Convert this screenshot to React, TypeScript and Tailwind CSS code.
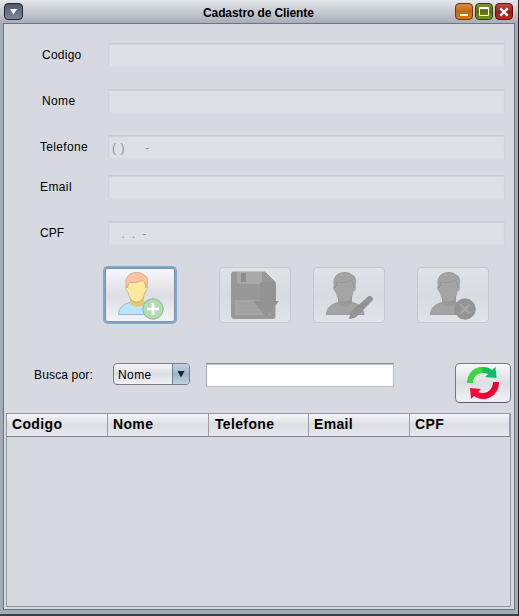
import React from "react";

const fields = [
  { label: "Codigo", pad: "pl-[38px]", gap: "mt-[19px]", tracking: "tracking-[.25px]", value: "", inputPad: "pl-[3px]" },
  { label: "Nome", pad: "pl-[38px]", gap: "mt-[22px]", tracking: "tracking-[.35px]", value: "", inputPad: "pl-[3px]" },
  { label: "Telefone", pad: "pl-9", gap: "mt-[22px]", tracking: "tracking-[.32px]", value: "( )     -", inputPad: "pl-[3px] tracking-[.5px] [word-spacing:.2px]" },
  { label: "Email", pad: "pl-9", gap: "mt-4", tracking: "tracking-[.4px]", value: "", inputPad: "pl-[3px]" },
  { label: "CPF", pad: "pl-9", gap: "mt-[22px]", tracking: "tracking-[.1px]", value: "   .  .  -", inputPad: "pl-[2px] tracking-[.15px]" },
];

const columns = [
  { name: "Codigo", width: "w-[101px]", pad: "pl-[5px]" },
  { name: "Nome", width: "w-[101px]", pad: "pl-[5px]" },
  { name: "Telefone", width: "w-[100px]", pad: "pl-[6px]" },
  { name: "Email", width: "w-[101px]", pad: "pl-[5px]" },
  { name: "CPF", width: "w-[100px]", pad: "pl-[5px]" },
];

function Person({ color = false }: { color?: boolean }) {
  const line = color ? "#aaa477" : "#949494";
  return (
    <>
      <path
        d="M5.5 46.500 C6 39 11 36 17 34.500 L31 34.500 C38 36 42 39 43 46.500 Z"
        fill={color ? "#bfe3fb" : "#a3a3a3"}
        stroke={color ? "#87b4d3" : "#969696"}
        strokeWidth=".9"
      />
      <path d="M17 28 V35 C19 40 29 40 31 35 V28 Z" fill={color ? "#e0ca70" : "#9a9a9a"} />
      <path
        d="M14 17 C12 17 12 22 15 24 C16 31 20 34 23.500 34 C27 34 31 31 32 24 C35 22 35 17 33 17 L31 11 H16 Z"
        fill={color ? "#fbe9a2" : "#a5a5a5"}
        stroke={line}
        strokeWidth=".6"
      />
      <path
        d="M14 20 C11 12 14 5 23 4.500 C27 4 30 6 31 7 C36 9 35 16 33 20 L32 15 L30 12 C25 15 19 15 16.500 14 Z"
        fill={color ? "#fcc39f" : "#a3a3a3"}
        stroke={color ? "#d3a084" : "#929292"}
        strokeWidth=".8"
      />
    </>
  );
}

function AddIcon() {
  return (
    <svg width="56" height="56" viewBox="0 0 56 56" aria-hidden="true">
      <Person color />
      <circle cx="40" cy="41" r="10.200" fill="#b4dcb3" stroke="#88bb90" />
      <path d="M40 35 V47 M34 41 H46" stroke="#fff" strokeWidth="2.600" />
    </svg>
  );
}

function SaveIcon() {
  return (
    <svg width="56" height="56" viewBox="0 0 56 56" aria-hidden="true">
      <path d="M6 4 H38 L48 14 V49 Q48 50.500 46 50.500 H7 Q4.500 50.500 4.500 48 V6 Q4.500 4 6 4 Z" fill="#989898" stroke="#909090" strokeWidth=".8" />
      <path d="M10 4 H35 V13 Q35 16 32 16 H13 Q10 16 10 13 Z" fill="#a9a9a9" />
      <path d="M14 5 H19 V14 H14 Z" fill="#8e8e8e" />
      <path d="M8 32 H43 V47 H8 Z" fill="#a5a5a5" />
      <path d="M12 36 H39 M12 40 H39 M12 44 H39" stroke="#9c9c9c" />
      <path d="M33 16 Q33 14 35 14 H47 Q49 14 49 16 V33 H52 L39 49 L26 33 H33 Z" fill="#939393" />
    </svg>
  );
}

function EditIcon() {
  return (
    <svg width="56" height="56" viewBox="0 0 56 56" aria-hidden="true">
      <Person />
      <path d="M28.500 50.500 L30.500 44 L47 29 Q49 27.500 51 29.500 Q52.500 31.500 50.500 33 L34.500 49 Z" fill="#939393" stroke="#898989" strokeWidth=".9" />
      <path d="M30.500 44 L34.500 49 M45 31 L49 35" fill="none" stroke="#a2a2a2" strokeWidth=".8" />
    </svg>
  );
}

function RemoveIcon() {
  return (
    <svg width="56" height="56" viewBox="0 0 56 56" aria-hidden="true">
      <Person />
      <circle cx="40" cy="41" r="10.200" fill="#949494" stroke="#8e8e8e" />
      <path d="M35.500 36.500 L44.500 45.500 M44.500 36.500 L35.500 45.500" stroke="#a9a9a9" strokeWidth="2.400" />
    </svg>
  );
}

function RefreshIcon() {
  return (
    <svg width="34" height="34" viewBox="0 0 34 34" aria-hidden="true">
      <path d="M1 17 C1 7 9 0 17 1 V7 C11 7 7 11 7 17 Z" fill="#37d83d" />
      <path d="M17 1 C21 1 24 2 26 4 L29.500 1 L30.500 12 L19 11 L22 8 Q20 7 17 7 Z" fill="#10bc68" />
      <path d="M33 16 C33 26 26 33 17 33 V27 C23 27 27 22 27 16 Z" fill="#eb0430" />
      <path d="M17 33 C13 33 11 32 8 30 L5 33 L4 22 L15 23 L12 26 Q14 27 17 27 Z" fill="#ff0539" />
    </svg>
  );
}

const disabledButton =
  "flex h-14 w-[72px] items-start justify-start rounded-[4px] border border-[#c5c8cd] bg-linear-to-b from-[#dfe2e6] via-[#d8dce1] to-[#e0e3e7] pl-[7px]";
const windowButton = "flex h-[17px] w-[18px] items-center justify-center rounded-[4px] border p-0";

export default function App() {
  return (
    <main className="flex h-[616px] w-[519px] flex-col overflow-hidden border-r border-b-2 border-r-[#20262c] border-b-[#34414b] bg-[#a4abb5] font-['Liberation_Sans',Arial,sans-serif] text-[12px] text-black">
      <header className="flex h-[23px] shrink-0 items-start bg-linear-to-b from-[#e5e7ea] via-[#c6cad1] to-[#a9adb8] pl-1 pr-[5px] pt-[3px]">
        <button aria-label="Menu" className="flex h-[17px] w-[19px] items-center justify-center rounded-[4px] border border-[#202632] bg-linear-to-b from-[#505969] to-[#7c8999]">
          <svg width="7" height="6" viewBox="0 0 7 6"><path d="M0 0 H7 L3.500 5.500 Z" fill="#fff" /></svg>
        </button>
        <h1 className="ml-[180px] mt-[2px] w-[112px] whitespace-nowrap text-[12px] leading-4 font-bold tracking-[-.1px]">Cadastro de Cliente</h1>
        <div className="ml-auto flex gap-[2px]">
          <button aria-label="Minimizar" className={windowButton + " border-[#713708] bg-linear-to-b from-[#d28c41] via-[#c16916] to-[#d8780e]"}>
            <svg width="10" height="11"><path d="M1 9 H9" stroke="#fff" strokeWidth="2" /></svg>
          </button>
          <button aria-label="Maximizar" className={windowButton + " border-[#37430a] bg-linear-to-b from-[#7c9337] via-[#59720a] to-[#79911c]"}>
            <svg width="10" height="9" viewBox="0 0 10 9"><path d="M.5 .5 H9.500 V8.500 H.5 Z M.5 1.500 H9.500" fill="none" stroke="#fff" /></svg>
          </button>
          <button aria-label="Fechar" className={windowButton + " border-[#650f0b] bg-linear-to-b from-[#c04c46] via-[#a11914] to-[#bd2920]"}>
            <svg width="10" height="10"><path d="M1.300 1.300 L8.700 8.700 M8.700 1.300 L1.300 8.700" stroke="#fff" strokeWidth="2.400" /></svg>
          </button>
        </div>
      </header>

      <section className="ml-[3px] mr-[3px] flex h-[587px] shrink-0 flex-col border border-[#6e7582] bg-[#d6d9e0]">
        {fields.map((field) => (
          <label key={field.label} className={"flex h-6 shrink-0 items-center " + field.gap}>
            <span className={"w-[104px] shrink-0 leading-6 " + field.tracking + " " + field.pad}>{field.label}</span>
            <input
              disabled
              value={field.value}
              readOnly
              className={"h-6 w-[397px] border border-t-[#c9ccd0] border-r-[#d2d5d9] border-b-[#d9dce1] border-l-[#cfd2d7] bg-[#dde0e4] pr-[3px] pt-[2px] text-[12px] text-[#8e9298] shadow-[inset_0_1px_1px_#d0d3d7] " + field.inputPad}
            />
          </label>
        ))}

        <div className="mt-5 flex h-[60px] shrink-0 items-center pl-[99px]">
          <button aria-label="Adicionar cliente" className="flex h-[58px] w-[74px] items-start rounded-[5px] border-2 border-[#7ba6d2] bg-linear-to-b from-[#f8f9fa] via-[#dcdee4] to-[#f2f4f8] pl-[8px] shadow-[inset_0_0_0_1px_#8290a3]">
            <AddIcon />
          </button>
          <button disabled aria-label="Salvar" className={disabledButton + " ml-[42px]"}><SaveIcon /></button>
          <button disabled aria-label="Editar cliente" className={disabledButton + " ml-[22px]"}><EditIcon /></button>
          <button disabled aria-label="Remover cliente" className={disabledButton + " ml-[32px]"}><RemoveIcon /></button>
        </div>

        <div className="mt-[38px] flex h-10 shrink-0 items-start pl-[30px]">
          <span className="w-[79px] leading-6 tracking-[.15px]">Busca por:</span>
          <button className="flex h-[22px] w-[77px] overflow-hidden rounded-[4px] border border-[#777f89] bg-linear-to-b from-[#f4f5f7] via-[#dcdfe4] to-[#f0f2f5] text-left">
            <span className="flex-1 pl-[4px] leading-[22px] tracking-[.4px]">Nome</span>
            <span className="flex h-full w-[17px] items-center justify-center border-l border-[#68849c] bg-linear-to-b from-[#c2d2e0] via-[#9eb6cb] to-[#bed2e2]">
              <svg width="8" height="7" viewBox="0 0 8 7"><path d="M.5 0 H7.500 L4 6.500 Z" fill="#202327" /></svg>
            </span>
          </button>
          <input aria-label="Busca" className="ml-4 h-6 w-[188px] border border-t-[#8a8d93] border-r-[#bfc1c5] border-b-[#bfc1c5] border-l-[#acafb4] bg-white px-1 shadow-[inset_0_1px_1px_#bfc1c5] outline-none" />
          <button aria-label="Atualizar" className="ml-[61px] flex h-10 w-14 items-center justify-center rounded-[5px] border border-[#737780] border-b-[#565b63] bg-linear-to-b from-[#f8f8f9] via-[#dcdee3] to-[#f0f2f6]">
            <RefreshIcon />
          </button>
        </div>

        <div className="ml-[2px] mt-[10px] flex h-[194px] w-[505px] shrink-0 flex-col border border-[#9297a1]">
          <div className="flex h-[23px] shrink-0 border-b border-[#7c838e] bg-linear-to-b from-[#f5f6f8] via-[#dbdde2] to-[#e6ebf1]">
            {columns.map((column) => (
              <div key={column.name} className={"h-full shrink-0 border-r border-[#9a9da4] text-[14px] leading-[20px] font-bold tracking-[.35px] " + column.width + " " + column.pad}>{column.name}</div>
            ))}
          </div>
        </div>
      </section>
    </main>
  );
}
